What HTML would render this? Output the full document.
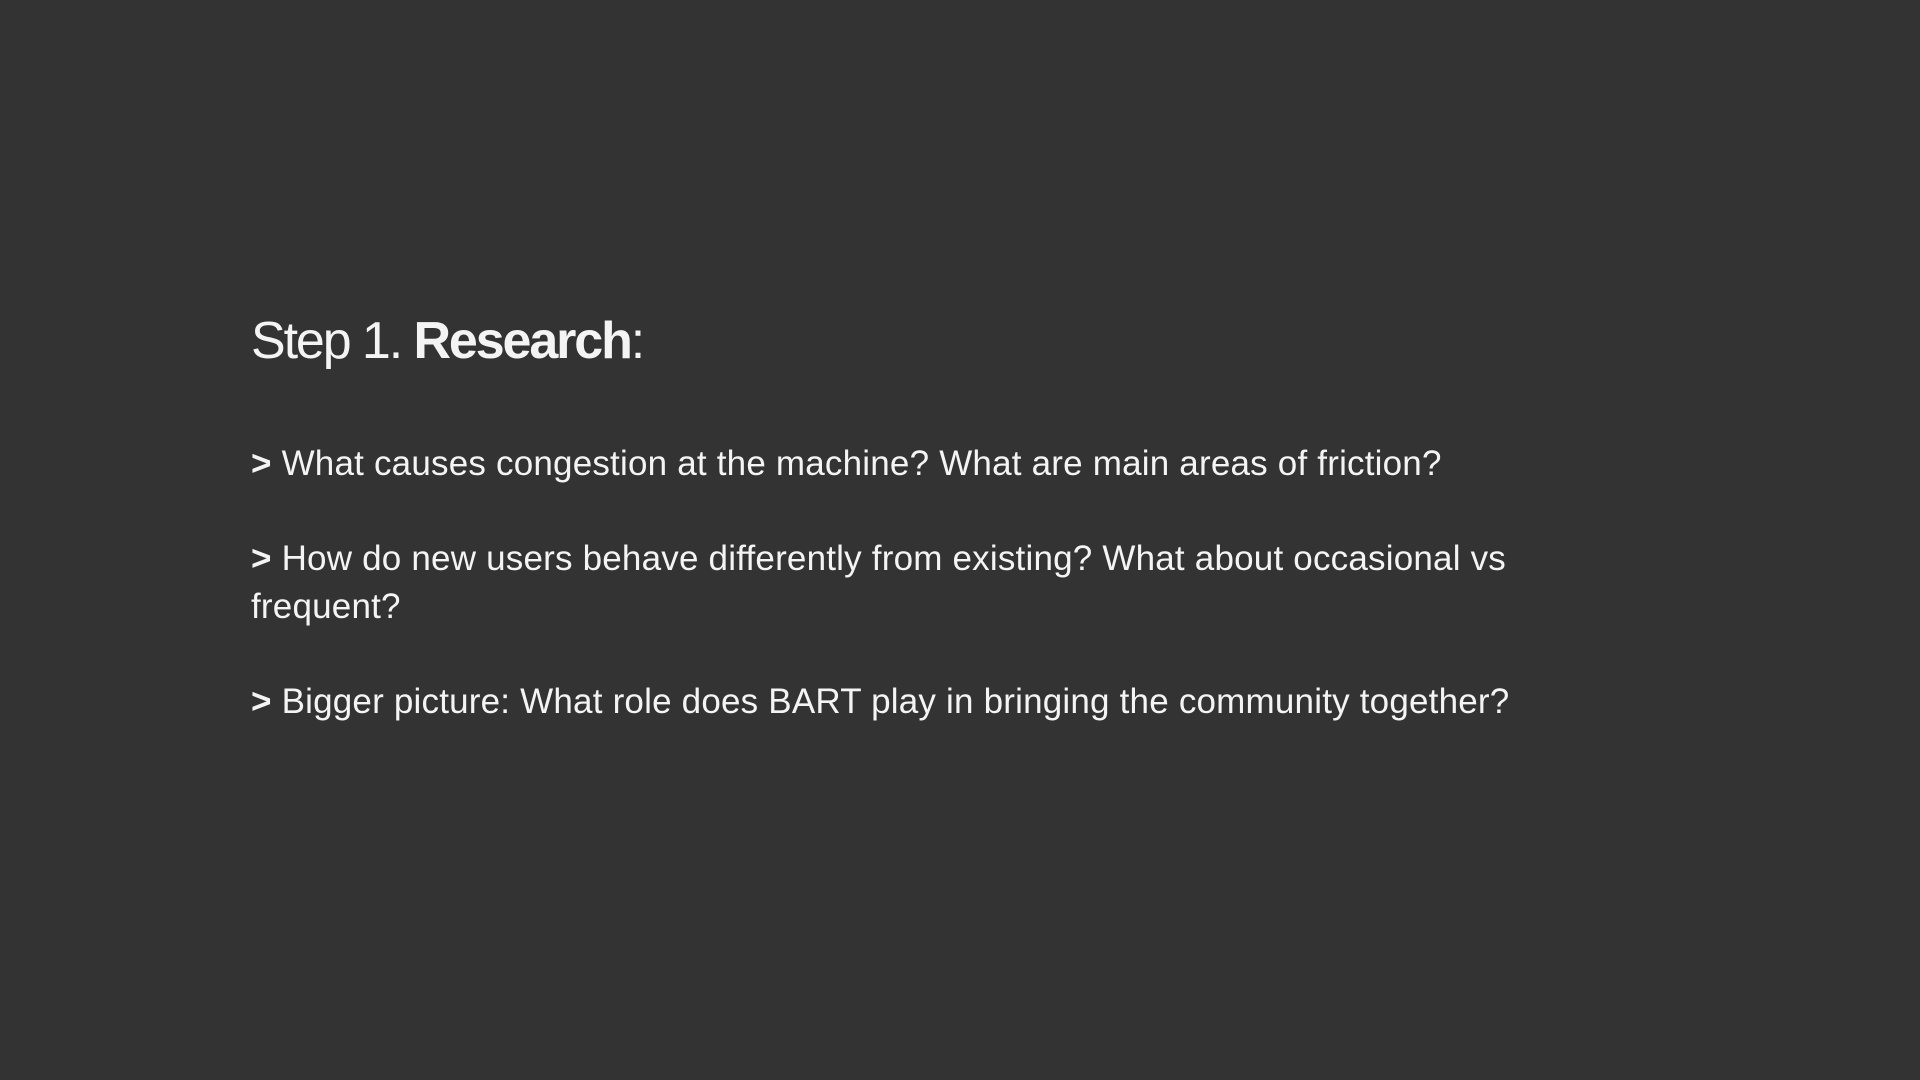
<!DOCTYPE html>
<html><head><meta charset="utf-8"><style>
html,body{margin:0;padding:0;background:#333333;width:1920px;height:1080px;overflow:hidden}
body{font-family:"Liberation Sans",sans-serif;color:#f4f4f4;position:relative}
.h{position:absolute;left:251px;top:311px;font-size:52px;white-space:nowrap;letter-spacing:-2.1px}
.p{position:absolute;left:251px;font-size:35px;white-space:nowrap;line-height:48px;letter-spacing:0.2px}
b{font-weight:bold}
</style></head><body>
<div class="h">Step 1. <b>Research</b>:</div>
<div class="p" style="top:440px"><b>&gt;</b> What causes congestion at the machine? What are main areas of friction?</div>
<div class="p" style="top:535px"><b>&gt;</b> How do new users behave differently from existing? What about occasional vs<br>frequent?</div>
<div class="p" style="top:678px"><b>&gt;</b> Bigger picture: What role does BART play in bringing the community together?</div>
</body></html>
